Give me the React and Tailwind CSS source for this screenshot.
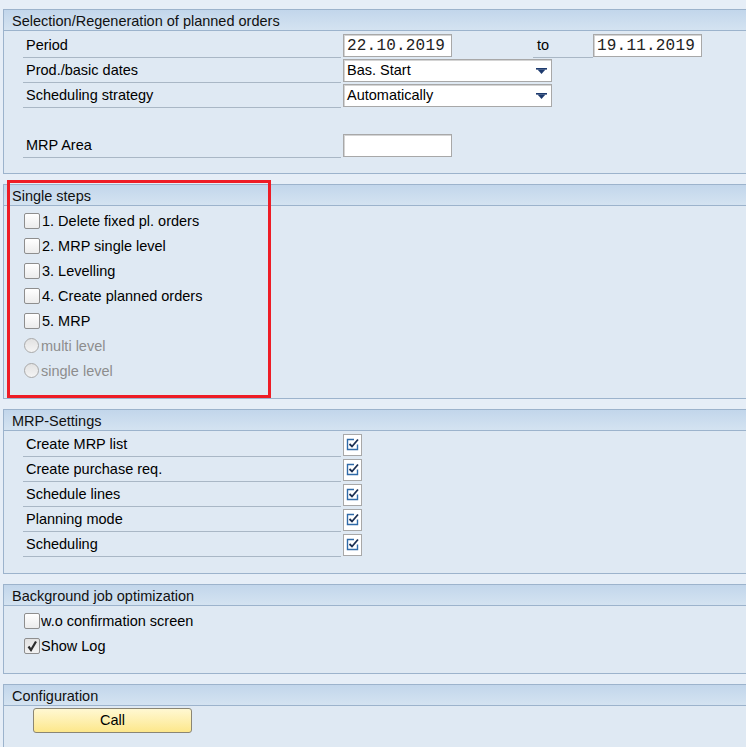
import React from "react";

const Group = ({ title, children, className = "" }) => (
  <div className={`border-t border-l border-b border-[#9cb3cc] bg-[#dfe9f3] ${className}`}>
    <div className="h-[21px] border-b border-[#9cb3cc] bg-gradient-to-b from-[#c2d6eb] to-[#d4e3f1] pl-[8px] pt-[1px] leading-[20px] text-[#111]">
      {title}
    </div>
    {children}
  </div>
);

const Label = ({ children }) => (
  <div className="ml-[19px] w-[318px] h-full border-b border-[#a9b7c5] pl-[3px] pt-[2px] flex items-center">
    {children}
  </div>
);

const TextInput = ({ value = "", width = "w-[109px]" }) => (
  <div
    className={`ml-[2px] ${width} h-[23px] bg-white border border-[#a8a8a8] shadow-[inset_1px_1px_0_#d4d4d4] pl-[3px] pt-[1px] flex items-center font-['Liberation_Mono','Courier_New',monospace] text-[16px] tracking-[0.2px] text-[#222]`}
  >
    {value}
  </div>
);

const Dropdown = ({ value }) => (
  <div className="ml-[2px] w-[209px] h-[23px] bg-white border border-[#a8a8a8] shadow-[inset_1px_1px_0_#d4d4d4] pl-[3px] pt-[1px] flex items-center justify-between pr-[4px]">
    <span>{value}</span>
    <svg width="11" height="7" viewBox="0 0 11 7">
      <rect x="0" y="0" width="11" height="1.6" fill="#1d3a6e" />
      <path d="M1.5 1.6 H9.5 L5.5 6 Z" fill="#1d3a6e" />
    </svg>
  </div>
);

const CheckBox = ({ checked = false }) => (
  <div
    className={`w-[16px] h-[16px] rounded-[2px] border border-[#8e8e8e] flex items-center justify-center ${
      checked ? "bg-gradient-to-b from-[#e2e2e2] to-[#f2f2f2]" : "bg-gradient-to-b from-white to-[#ececec]"
    }`}
  >
    {checked && (
      <svg width="12" height="12" viewBox="0 0 12 12">
        <path d="M2.5 6.5 L5 10 L10 1.5" stroke="#2b2b2b" strokeWidth="2.2" fill="none" />
      </svg>
    )}
  </div>
);

const Radio = () => (
  <div className="w-[15px] h-[15px] rounded-full border-[1.5px] border-[#a9a9a9] bg-gradient-to-b from-[#e2e2e2] to-[#f4f4f4]" />
);

const SettingBox = () => (
  <div className="ml-[2px] w-[19px] h-[22px] bg-white border border-[#a8a8a8] flex items-center justify-center">
    <svg width="13" height="13" viewBox="0 0 13 13">
      <path d="M8 1.5 H1.5 V11.5 H11.5 V6.5" stroke="#2f6aa8" strokeWidth="1.4" fill="none" />
      <path d="M3.5 6 L6 8.5 L12 1.5" stroke="#1b2f52" strokeWidth="1.8" fill="none" />
    </svg>
  </div>
);

const StepRow = ({ children, disabled, radio }) => (
  <div className="h-[25px] flex items-center pl-[20px]">
    {radio ? <Radio /> : <CheckBox />}
    <span className={`ml-[2px] pt-[2px] ${disabled ? "text-[#8d8d8d]" : ""}`}>{children}</span>
  </div>
);

const SettingRow = ({ children }) => (
  <div className="h-[25px] flex items-center">
    <Label>{children}</Label>
    <SettingBox />
  </div>
);

export default function App() {
  return (
    <div className="relative w-[746px] h-[747px] overflow-hidden bg-[#e6eef7] pt-[9px] pl-[3px] font-['Liberation_Sans',Arial,sans-serif] text-[14.5px] text-black">
      <Group title="Selection/Regeneration of planned orders">
        <div className="pt-[2px] pb-[15px]">
          <div className="h-[25px] flex items-center">
            <Label>Period</Label>
            <TextInput value="22.10.2019" />
            <div className="ml-[81px] w-[60px] h-full border-b border-[#a9b7c5] pl-[4px] pt-[2px] flex items-center">to</div>
            <div className="-ml-[2px]">
              <TextInput value="19.11.2019" />
            </div>
          </div>
          <div className="h-[25px] flex items-center">
            <Label>Prod./basic dates</Label>
            <Dropdown value="Bas. Start" />
          </div>
          <div className="h-[25px] flex items-center">
            <Label>Scheduling strategy</Label>
            <Dropdown value="Automatically" />
          </div>
          <div className="h-[25px]" />
          <div className="h-[25px] flex items-center">
            <Label>MRP Area</Label>
            <TextInput />
          </div>
        </div>
      </Group>

      <Group title="Single steps" className="mt-[10px]">
        <div className="pt-[2px] pb-[15px]">
          <StepRow>1. Delete fixed pl. orders</StepRow>
          <StepRow>2. MRP single level</StepRow>
          <StepRow>3. Levelling</StepRow>
          <StepRow>4. Create planned orders</StepRow>
          <StepRow>5. MRP</StepRow>
          <StepRow radio disabled>multi level</StepRow>
          <StepRow radio disabled>single level</StepRow>
        </div>
      </Group>

      <Group title="MRP-Settings" className="mt-[10px]">
        <div className="pt-[1px] pb-[16px]">
          <SettingRow>Create MRP list</SettingRow>
          <SettingRow>Create purchase req.</SettingRow>
          <SettingRow>Schedule lines</SettingRow>
          <SettingRow>Planning mode</SettingRow>
          <SettingRow>Scheduling</SettingRow>
        </div>
      </Group>

      <Group title="Background job optimization" className="mt-[10px]">
        <div className="pt-[2px] pb-[15px]">
          <div className="h-[25px] flex items-center pl-[20px]">
            <CheckBox />
            <span className="ml-[1px] pt-[2px]">w.o confirmation screen</span>
          </div>
          <div className="h-[25px] flex items-center pl-[20px]">
            <CheckBox checked />
            <span className="ml-[1px] pt-[2px]">Show Log</span>
          </div>
        </div>
      </Group>

      <Group title="Configuration" className="mt-[10px]">
        <div className="pt-[2px] pb-[40px]">
          <button className="ml-[29px] w-[159px] h-[25px] pt-[1px] rounded-[3px] border border-[#8b8674] bg-gradient-to-b from-[#fff8d2] to-[#fde78a] text-center">
            Call
          </button>
        </div>
      </Group>

      <div className="absolute left-[7px] top-[180px] w-[264px] h-[218px] border-[3px] border-[#ee1c25]" />
    </div>
  );
}
